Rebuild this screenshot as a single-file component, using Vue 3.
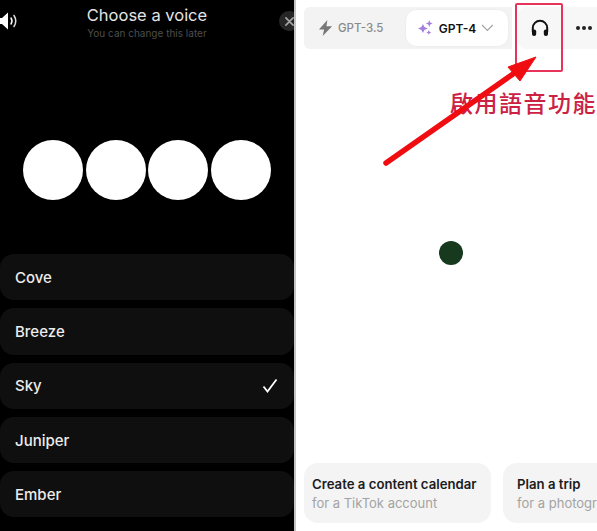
<template>
  <div class="page">
    <section class="voice">
      <header class="voice-head">
        <svg class="speaker" width="20" height="22" viewBox="0 0 20 22">
          <path d="M-1 8 L2 8 L8 2.500 V19.500 L2 14 H-1 Z" fill="#fff" />
          <path d="M11 8 Q13 11 11 14" fill="none" stroke="#fff" stroke-width="1.500" stroke-linecap="round" />
          <path d="M14 5.500 Q17.500 11 14 16.500" fill="none" stroke="#ddd" stroke-width="1.500" stroke-linecap="round" />
        </svg>
        <h1>Choose a voice</h1>
        <p>You can change this later</p>
        <button class="close" aria-label="Close">
          <svg width="9" height="9" viewBox="0 0 10 10">
            <path d="M1 1 L9 9 M9 1 L1 9" stroke="#a8a8a8" stroke-width="1.800" stroke-linecap="round" />
          </svg>
        </button>
      </header>

      <div class="bubbles">
        <span v-for="n in 4" :key="n" class="bubble"></span>
      </div>

      <ul class="voice-list">
        <li v-for="v in voices" :key="v">
          <span>{{ v }}</span>
          <svg v-if="v === selected" width="16" height="15" viewBox="0 0 16 15">
            <path d="M1.500 8.500 L5.500 13.500 L14.500 1.500" fill="none" stroke="#fff" stroke-width="1.800" />
          </svg>
        </li>
      </ul>
    </section>

    <section class="chat">
      <div class="topbar">
        <div class="models">
          <div class="model">
            <svg width="15" height="18" viewBox="0 0 16 18">
              <path d="M10 0.500 L1 10.500 H6.500 L5 17.500 L15 7 H9 Z" fill="#777" />
            </svg>
            <span>GPT-3.5</span>
          </div>
          <div class="model active">
            <svg width="16" height="16" viewBox="0 0 16 16" fill="#a280dc">
              <path d="M5 4 L6.500 7 L10 8.500 L6.500 10 L5 13 L3.500 10 L0 8.500 L3.500 7 Z" />
              <path d="M11.500 0 L12.500 2.500 L15 3.500 L12.500 4.500 L11.500 7 L10.500 4.500 L8 3.500 L10.500 2.500 Z" />
              <path d="M11 10 L11.800 11.700 L13.500 12.500 L11.800 13.300 L11 15 L10.200 13.300 L8.500 12.500 L10.200 11.700 Z" />
            </svg>
            <span>GPT-4</span>
            <svg width="13" height="8" viewBox="0 0 13 8">
              <path d="M1 1 L6.500 6.500 L12 1" fill="none" stroke="#a5a5a5" stroke-width="1.300" />
            </svg>
          </div>
        </div>
        <div class="actions">
          <svg width="18" height="18" viewBox="0 0 18 18" fill="none">
            <path d="M1.800 13 V9 a7.200 7.200 0 0 1 14.400 0 V13" stroke="#111" stroke-width="2" />
            <rect x="1" y="10.500" width="4.200" height="6.500" rx="2" fill="#111" />
            <rect x="12.800" y="10.500" width="4.200" height="6.500" rx="2" fill="#111" />
          </svg>
          <span class="dots"><i></i><i></i><i></i></span>
        </div>
      </div>

      <div class="stage"><span class="dot"></span></div>

      <div class="prompts">
        <div v-for="p in prompts" :key="p.title" class="prompt">
          <strong>{{ p.title }}</strong>
          <small>{{ p.sub }}</small>
        </div>
      </div>

      <!-- annotation drawn over the screenshot -->
      <div class="mark"></div>
      <div class="mark-label">啟用語音功能</div>
      <svg class="arrow" width="170" height="125" viewBox="0 0 170 125">
        <path d="M3 107 L130 18" stroke="#f00d12" stroke-width="5.500" stroke-linecap="round" />
        <path d="M153 1 L125 11 L137 25 Z" fill="#f00d12" stroke="#f00d12" stroke-linejoin="round" />
      </svg>
    </section>
  </div>
</template>

<script setup>
const voices = ["Cove", "Breeze", "Sky", "Juniper", "Ember"];
const selected = "Sky";
const prompts = [
  { title: "Create a content calendar", sub: "for a TikTok account" },
  { title: "Plan a trip", sub: "for a photography tour" },
];
</script>

<style>
html,
body {
  margin: 0;
  background: #fff;
}
</style>

<style scoped>
.page {
  display: flex;
  width: 597px;
  height: 531px;
  overflow: hidden;
  font-family: Inter, "Liberation Sans", sans-serif;
}
.voice {
  flex: none;
  box-sizing: content-box;
  width: 294px;
  height: 531px;
  margin-right: 1px;
  background: #000;
  border-right: 2px solid #c4c4c4;
  overflow: hidden;
  display: flex;
  flex-direction: column;
}
.voice-head {
  position: relative;
  height: 140px;
  text-align: center;
  box-sizing: border-box;
  padding-top: 5px;
}
.voice-head h1 {
  margin: 0;
  font-size: 16.500px;
  line-height: 21px;
  font-weight: 400;
  color: #e4e4e4;
}
.voice-head p {
  margin: 1px 0 0;
  font-size: 10px;
  line-height: 13px;
  color: #4e4e4e;
}
.speaker {
  position: absolute;
  left: 0;
  top: 10px;
}
.close {
  position: absolute;
  left: 279px;
  top: 11px;
  width: 20px;
  height: 20px;
  padding: 0;
  border: 0;
  border-radius: 50%;
  background: #262626;
  display: flex;
  align-items: center;
  justify-content: center;
}
.bubbles {
  display: flex;
  gap: 2.700px;
  padding-left: 23px;
}
.bubble {
  width: 60px;
  height: 60px;
  border-radius: 50%;
  background: #fff;
}
.voice-list {
  list-style: none;
  margin: 54px 0 0;
  padding: 0;
  display: flex;
  flex-direction: column;
  gap: 8px;
}
.voice-list li {
  height: 46.300px;
  border-radius: 14px;
  background: #0f0f0f;
  color: #ececec;
  font-size: 15px;
  font-weight: 500;
  display: flex;
  align-items: center;
  justify-content: space-between;
  padding: 0 16px 0 15px;
}
.chat {
  position: relative;
  flex: 1;
  min-width: 0;
  display: flex;
  flex-direction: column;
  background: #fff;
}
.topbar {
  height: 42px;
  margin-top: 7px;
  padding-left: 7px;
  display: flex;
  gap: 6px;
}
.models {
  width: 208px;
  box-sizing: border-box;
  background: #f3f3f3;
  border-radius: 6px 0 0 6px;
  display: flex;
  align-items: center;
  justify-content: space-between;
  padding: 0 4px 0 14px;
}
.model {
  display: flex;
  align-items: center;
  gap: 5px;
  font-size: 11.500px;
  font-weight: 500;
  color: #8a8a8a;
  white-space: nowrap;
}
.model.active {
  width: 102px;
  height: 36px;
  box-sizing: border-box;
  padding: 0 14px 0 12px;
  justify-content: space-between;
  background: #fff;
  border-radius: 10px;
  color: #111;
  font-size: 12px;
  font-weight: 600;
  box-shadow: 0 0 2px rgba(0, 0, 0, 0.08);
}
.actions {
  flex: 1;
  background: #f7f7f7;
  border-radius: 8px 0 0 8px;
  display: flex;
  align-items: center;
  padding-left: 13px;
  gap: 27px;
}
.dots {
  display: flex;
  gap: 2px;
}
.dots i {
  width: 4px;
  height: 4px;
  border-radius: 50%;
  background: #222;
}
.stage {
  flex: 1;
  display: flex;
  justify-content: center;
}
.dot {
  width: 24px;
  height: 24px;
  margin: 192px 0 0 8px;
  border-radius: 50%;
  background: #173a1f;
}
.prompts {
  display: flex;
  gap: 12px;
  margin-left: 7px;
  margin-bottom: 8px;
}
.prompt {
  flex: none;
  box-sizing: border-box;
  width: 187px;
  height: 60px;
  padding: 13px 8px 0;
  border-radius: 14px;
  background: #f4f4f4;
  display: flex;
  flex-direction: column;
  gap: 3px;
  white-space: nowrap;
}
.prompt + .prompt {
  padding-left: 14px;
}
.prompt strong {
  font-size: 13.200px;
  line-height: 16px;
  font-weight: 600;
  color: #1c1c1c;
}
.prompt small {
  font-size: 13px;
  line-height: 16px;
  color: #a3a3a3;
}
.mark {
  position: absolute;
  left: 218px;
  top: 3px;
  width: 48px;
  height: 69px;
  box-sizing: border-box;
  border: 2px solid #e8335a;
  border-radius: 2px;
}
.mark-label {
  position: absolute;
  left: 153px;
  top: 87px;
  font-family: "Noto Sans CJK TC", sans-serif;
  font-size: 23px;
  font-weight: 500;
  line-height: 30px;
  letter-spacing: 1.500px;
  color: #cb2244;
  white-space: nowrap;
}
.arrow {
  position: absolute;
  left: 86px;
  top: 56px;
}
</style>
